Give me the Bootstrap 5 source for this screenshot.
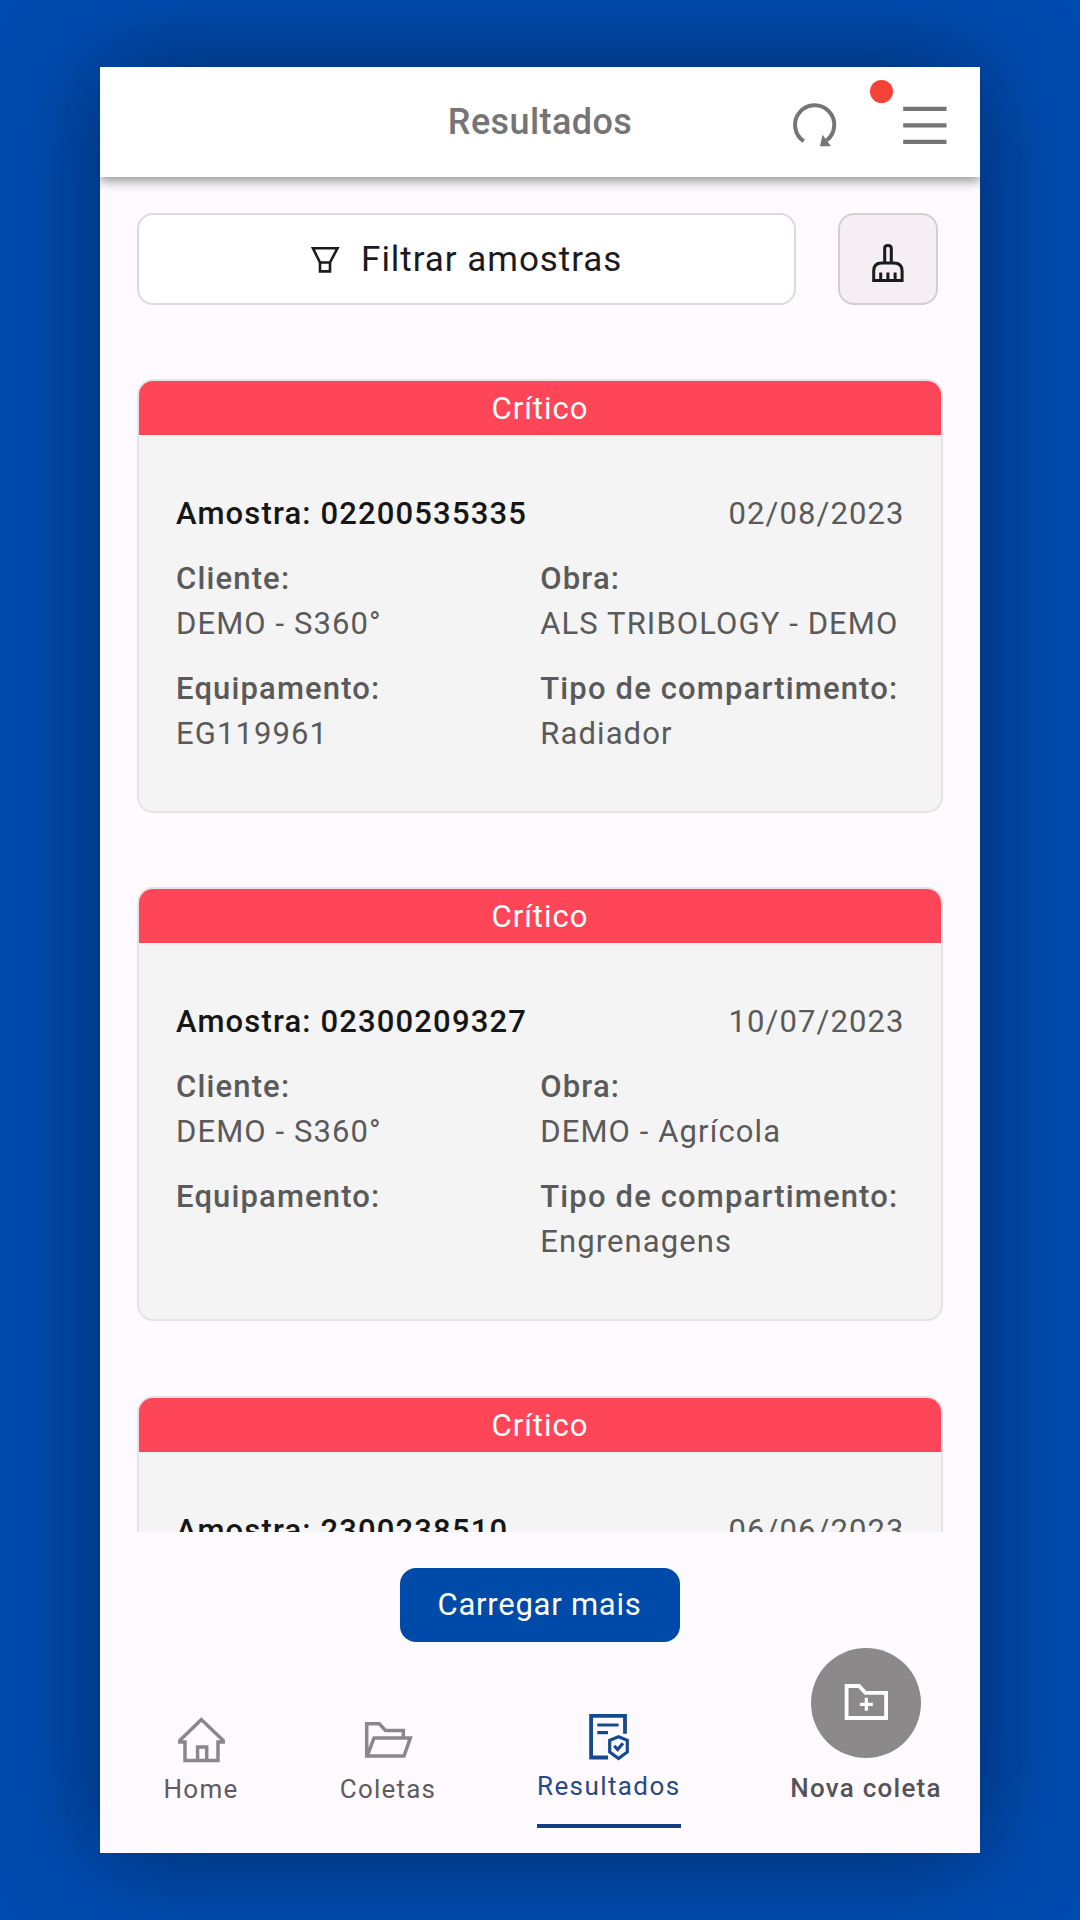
<!DOCTYPE html>
<html lang="pt-BR">
<head>
<meta charset="utf-8">
<meta name="viewport" content="width=device-width, initial-scale=1">
<title>Resultados</title>
<link rel="stylesheet" href="https://cdn.jsdelivr.net/npm/bootstrap@5.3.0/dist/css/bootstrap.min.css">
<style>
  body { background: #004bb0; font-family: Roboto, "Liberation Sans", sans-serif; height: 1920px; overflow: hidden; padding: 67px 100px; }
  .phone { width: 880px; height: 1786px; background: #fefaff; box-shadow: 0 0 100px rgba(0,0,0,.44); }
  .topbar { height: 109.5px; background: #fff; box-shadow: 0 4px 11px rgba(0,0,0,.42); clip-path: inset(0 0 -30px 0); z-index: 2; }
  .topbar h1 { font-size: 36px; font-weight: 500; line-height: 44px; color: #757575; margin: 32.5px 0 0; letter-spacing: .4px; }
  .side { width: 300px; }
  .actions { height: 60px; gap: 60px; margin-top: 28px; padding-right: 30px; }
  .dot { width: 23px; height: 23px; background: #f44236; right: 87.5px; top: 12.5px; }
  .filters { padding: 36px 42px 0 37px; gap: 42px; }
  .filter-btn, .clean-btn { height: 92px; border: 2px solid #dddadd; border-radius: 16px; }
  .filter-btn { background: #fff; font-size: 35px; line-height: 44px; letter-spacing: .95px; color: #1b1b1f; padding: 2px 0 0; gap: 21.5px; }
  .clean-btn { width: 100px; background: #f5eff4; border-color: #d4cfd3; padding: 8px 0 0; }
  .samples { height: 1227px; padding: 74.5px 37px 0; gap: 74.6px; }
  .sample { height: 433.7px; border: 2px solid #e6e2e6; border-radius: 16px; background: #f4f4f4; overflow: hidden; font-size: 31px; line-height: 45px; letter-spacing: 1.1px; color: #5a5a5a; }
  .status { height: 54px; line-height: 56px; background: #ff4658; color: #fff; letter-spacing: 1px; }
  .sample-body { padding: 56px 36.5px 0 37px; }
  .sample-body .pair { margin-top: 20px; }
  .sample-body strong { font-weight: 500; display: block; letter-spacing: 1.15px; }
  .sample-body strong.sample-id { color: #161616; }
  .more { height: 117px; }
  .more .btn { width: 280px; height: 74px; margin-top: 36px; background: #004aa9; color: #fff; border: 0; border-radius: 16px; font-size: 31px; letter-spacing: .75px; padding: 2px 1px 0 0; }
  .tabs { padding: 0 0 0 62.75px; gap: 100px; height: 179px; }
  .tab { font-size: 26px; line-height: 34px; letter-spacing: 1.2px; color: #5e5c60; gap: 8px; white-space: nowrap; }
  .tab-home { width: 76.5px; padding-bottom: 21.5px; }
  .tab-col { width: 97.5px; padding-bottom: 21.5px; }
  .tab-res { width: 144px; height: 117px; border-bottom: 4.5px solid #123f80; color: #284a84; letter-spacing: 1.4px; }
  .tab-new { width: 170.5px; padding-bottom: 22.6px; gap: 12.6px; font-weight: 500; letter-spacing: 1.25px; color: #555357; }
  .fab { width: 110px; height: 110px; background: #8b8989; }
  svg { fill: none; display: block; flex: none; }
</style>
</head>
<body>
<main class="phone d-flex flex-column">
  <header class="topbar d-flex justify-content-between position-relative">
    <div class="side"></div>
    <h1>Resultados</h1>
    <div class="side">
      <div class="actions d-flex justify-content-end align-items-center">
        <svg width="50" height="50" viewBox="790 100 50 50" stroke="#757575" stroke-width="4"><path d="M803.8 141.2A19.6 19.6 0 1 1 826.5 140.5"/><path d="M822.5 134.8L831 146.2H820Z" fill="#757575" stroke="none"/></svg>
        <svg width="50" height="50" viewBox="900 100 50 50" stroke="#757575" stroke-width="4.2"><path d="M903.2 108.8H946.5M903.2 125.4H946.5M903.2 141.9H946.5"/></svg>
      </div>
      <span class="dot rounded-circle position-absolute"></span>
    </div>
  </header>
  <section class="filters d-flex">
    <button class="filter-btn flex-fill d-flex align-items-center justify-content-center"><svg width="29" height="28" viewBox="312 246 29 28" stroke="#1b1b1f" stroke-width="2.6"><path d="M313.9 248.2H338.5L331 262.5V271.4H321V262.5ZM321 262.5H331"/></svg>Filtrar amostras</button>
    <button class="clean-btn d-flex align-items-center justify-content-center"><svg width="34" height="40" viewBox="871.5 243 34 40" stroke="#1b1b1f" stroke-width="3"><path d="M885.2 262V248Q885.2 245.4 888.4 245.4T891.8 248V262M874.2 280.5V271Q874.2 263 882 263H894.5Q902.6 263 902.6 271V280.5ZM881.2 272.5V280M888.4 272.5V280M895.6 272.5V280"/></svg></button>
  </section>
  <section class="samples d-flex flex-column overflow-hidden">
    <article class="sample flex-shrink-0">
      <div class="status text-center">Crítico</div>
      <div class="sample-body">
        <div class="d-flex justify-content-between"><strong class="sample-id">Amostra: 02200535335</strong><span>02/08/2023</span></div>
        <div class="row g-0 pair"><div class="col-6"><strong>Cliente:</strong>DEMO - S360°</div><div class="col-6 text-nowrap"><strong>Obra:</strong>ALS TRIBOLOGY - DEMO</div></div>
        <div class="row g-0 pair"><div class="col-6"><strong>Equipamento:</strong>EG119961</div><div class="col-6 text-nowrap"><strong>Tipo de compartimento:</strong>Radiador</div></div>
      </div>
    </article>
    <article class="sample flex-shrink-0">
      <div class="status text-center">Crítico</div>
      <div class="sample-body">
        <div class="d-flex justify-content-between"><strong class="sample-id">Amostra: 02300209327</strong><span>10/07/2023</span></div>
        <div class="row g-0 pair"><div class="col-6"><strong>Cliente:</strong>DEMO - S360°</div><div class="col-6 text-nowrap"><strong>Obra:</strong>DEMO - Agrícola</div></div>
        <div class="row g-0 pair"><div class="col-6"><strong>Equipamento:</strong></div><div class="col-6 text-nowrap"><strong>Tipo de compartimento:</strong>Engrenagens</div></div>
      </div>
    </article>
    <article class="sample flex-shrink-0">
      <div class="status text-center">Crítico</div>
      <div class="sample-body">
        <div class="d-flex justify-content-between"><strong class="sample-id">Amostra: 2300238510</strong><span>06/06/2023</span></div>
      </div>
    </article>
  </section>
  <div class="more text-center"><button class="btn">Carregar mais</button></div>
  <nav class="tabs d-flex align-items-end">
    <div class="tab tab-home d-flex flex-column align-items-center"><svg width="50" height="50" stroke="#8a878a" stroke-width="3.5"><path d="M25.4 5.6L3.8 26.6V28H9V46.5H42V28H47.2V26.6ZM21.6 46V33H30.7V46"/></svg>Home</div>
    <div class="tab tab-col d-flex flex-column align-items-center"><svg width="50" height="50" stroke="#8a878a" stroke-width="3.5"><path d="M3.7 43.5V9.8H16.3L22.5 16.5H40.3V23M11 24H47.3L41 42H4.3Z"/></svg>Coletas</div>
    <div class="tab tab-res d-flex flex-column align-items-center"><svg width="50" height="50" stroke="#164a8e" stroke-width="3.8"><path d="M41 22.7V4.9H7.1V46.5H24"/><path stroke-width="3.2" d="M13.3 14H34.6M13.3 21.7H24M34.5 25.8L43.3 29.3V41L34.5 47.6L25.7 41V29.3ZM30.3 34.7L33.6 38.6L39 32.3"/></svg>Resultados</div>
    <div class="tab tab-new d-flex flex-column align-items-center"><div class="fab rounded-circle d-flex align-items-center justify-content-center"><svg width="50" height="50" stroke="#fff" stroke-width="3.8"><path d="M5.6 40V8H18L24.4 14.8H45.1V40Z"/><path stroke-width="3.2" d="M18.8 26.3H31.8M25.3 19.8V32.8"/></svg></div>Nova coleta</div>
  </nav>
</main>
<script src="https://cdn.jsdelivr.net/npm/bootstrap@5.3.0/dist/js/bootstrap.bundle.min.js"></script>
</body>
</html>
